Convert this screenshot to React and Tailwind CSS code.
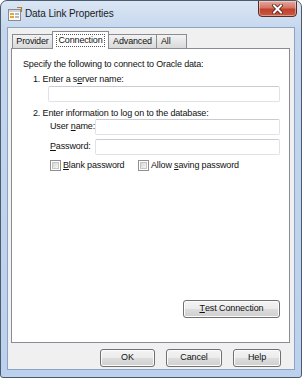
import React from "react";

const F = { fontFamily: '"Liberation Sans", Arial, sans-serif' };

function Btn({ children, className = "" }) {
  return (
    <div
      className={
        "flex items-center justify-center h-[18px] rounded-[3px] border border-[#707070] text-[9px] tracking-[-0.1px] text-[#111] whitespace-nowrap bg-[linear-gradient(#f4f4f4_0%,#ebebeb_50%,#dddddd_51%,#cfcfcf_100%)] shadow-[inset_0_0_0_1px_#fcfcfc] " +
        className
      }
    >
      {children}
    </div>
  );
}

function Input({ className = "" }) {
  return (
    <div
      className={
        "h-[16px] bg-white border border-[#dfe3e8] border-t-[#c8ccd2] rounded-[2px] " + className
      }
    />
  );
}

function Check() {
  return (
    <div className="w-[11px] h-[11px] shrink-0 border border-[#8f8f8f] bg-white p-[1px]">
      <div className="w-full h-full bg-[linear-gradient(135deg,#d4d4d4,#f7f7f7)] border border-[#c6c6c6]" />
    </div>
  );
}

function Tab({ children, active, className = "" }) {
  if (active)
    return (
      <div
        className={
          "relative z-10 h-[18px] -mb-[1px] flex justify-center items-start pt-[2px] bg-white border border-[#898c95] border-b-0 whitespace-nowrap " +
          className
        }
      >
        <span className="border border-dotted border-[#555] px-[1px] leading-[11px]">{children}</span>
      </div>
    );
  return (
    <div
      className={
        "h-[14px] mt-[3px] flex justify-center items-center bg-[linear-gradient(#f3f3f3,#e6e6e6_50%,#d9d9d9)] border border-[#898c95] border-b-0 whitespace-nowrap " +
        className
      }
    >
      {children}
    </div>
  );
}

export default function App() {
  return (
    <div style={F} className="w-[302px] h-[378px] bg-white text-[9px] tracking-[-0.15px] text-[#111]">
      <div className="w-[302px] h-[378px] rounded-t-[7px] rounded-b-[3px] border border-[#4c5a6e] bg-[linear-gradient(#dae6f4,#c4d6ee_30px,#bcd1ed)] flex flex-col overflow-hidden">
        {/* Title bar */}
        <div className="h-[26px] flex items-start relative shrink-0">
          <svg width="16" height="16" viewBox="0 0 16 16" className="ml-[6px] mt-[5px]">
            <rect x="1.5" y="3.5" width="12" height="11" fill="#fbfbf8" stroke="#8b8b8b" />
            <rect x="2" y="4" width="11" height="2" fill="#c9d4e4" />
            <rect x="3" y="7" width="4" height="2" fill="#e8a33a" />
            <rect x="3" y="10" width="4" height="2" fill="#e8a33a" />
            <rect x="8" y="7" width="4" height="2" fill="#b8b8b8" />
            <rect x="8" y="10" width="4" height="2" fill="#b8b8b8" />
            <path d="M10 1.5 L14.5 1.5 L14.5 6" fill="none" stroke="#c07a20" strokeWidth="1.2" />
          </svg>
          <div className="ml-[2px] mt-[6px] text-[10px] tracking-[-0.1px] text-[#1b1b1b] leading-[14px]">Data Link Properties</div>
          <div className="absolute right-[4px] top-[-1px] w-[39px] h-[17px] rounded-b-[4px] border border-[#5c2a24] bg-[linear-gradient(#e5a99d,#d47566_45%,#c0412e_55%,#c85a40)] flex items-center justify-center shadow-[inset_0_0_0_1px_rgba(255,255,255,0.4)]">
            <svg width="11" height="10" viewBox="0 0 11 10">
              <path d="M2 1.5 L9 8.5 M9 1.5 L2 8.5" stroke="#4a1a14" strokeWidth="3.6" strokeLinecap="square" />
              <path d="M2 1.5 L9 8.5 M9 1.5 L2 8.5" stroke="#ffffff" strokeWidth="2" strokeLinecap="square" />
            </svg>
          </div>
        </div>

        {/* Client area */}
        <div className="mx-[6px] mb-[7px] flex-1 border border-[#8ca3c2] bg-[#f0f0f0] flex flex-col">
          <div className="ml-[3px] mr-[4px] mt-[2px] flex flex-col">
            {/* Tabs */}
            <div className="flex items-end pl-[1px] h-[18px]">
              <Tab className="w-[41px]">Provider</Tab>
              <Tab active className="w-[57px] -ml-[1px] -mr-[1px]">Connection</Tab>
              <Tab className="w-[49px]">Advanced</Tab>
              <Tab className="w-[31px] -ml-[1px] justify-start pl-[4px]">All</Tab>
            </div>
            {/* Panel */}
            <div className="h-[295px] bg-white border border-[#898c95] flex flex-col pl-[11px] pr-[9px]">
              <div className="mt-[9px] leading-[12px]">Specify the following to connect to Oracle data:</div>
              <div className="mt-[3px] ml-[10px] leading-[12px]">
                1. Enter a s<span className="underline">e</span>rver name:
              </div>
              <Input className="ml-[25px] mt-[1px]" />
              <div className="mt-[5px] ml-[10px] leading-[12px]">2. Enter information to log on to the database:</div>
              <div className="mt-[0px] ml-[27px] flex items-center">
                <div className="w-[45px] whitespace-nowrap">
                  User <span className="underline">n</span>ame:
                </div>
                <Input className="flex-1" />
              </div>
              <div className="mt-[4px] ml-[27px] flex items-center">
                <div className="w-[45px] whitespace-nowrap">
                  <span className="underline">P</span>assword:
                </div>
                <Input className="flex-1" />
              </div>
              <div className="mt-[4px] ml-[27px] flex items-center whitespace-nowrap">
                <Check />
                <div className="ml-[2px] w-[75px]">
                  <span className="underline">B</span>lank password
                </div>
                <Check />
                <div className="ml-[2px]">
                  Allow <span className="underline">s</span>aving password
                </div>
              </div>
              <div className="flex-1" />
              <div className="flex justify-end mb-[24px]">
                <Btn className="w-[97px]">
                  <span className="underline">T</span>est Connection
                </Btn>
              </div>
            </div>
          </div>
          {/* Bottom buttons */}
          <div className="mt-[6px] flex justify-end pr-[13px] gap-[11px]">
            <Btn className="w-[55px]">OK</Btn>
            <Btn className="w-[56px]">Cancel</Btn>
            <Btn className="w-[48px]">Help</Btn>
          </div>
        </div>
      </div>
    </div>
  );
}
